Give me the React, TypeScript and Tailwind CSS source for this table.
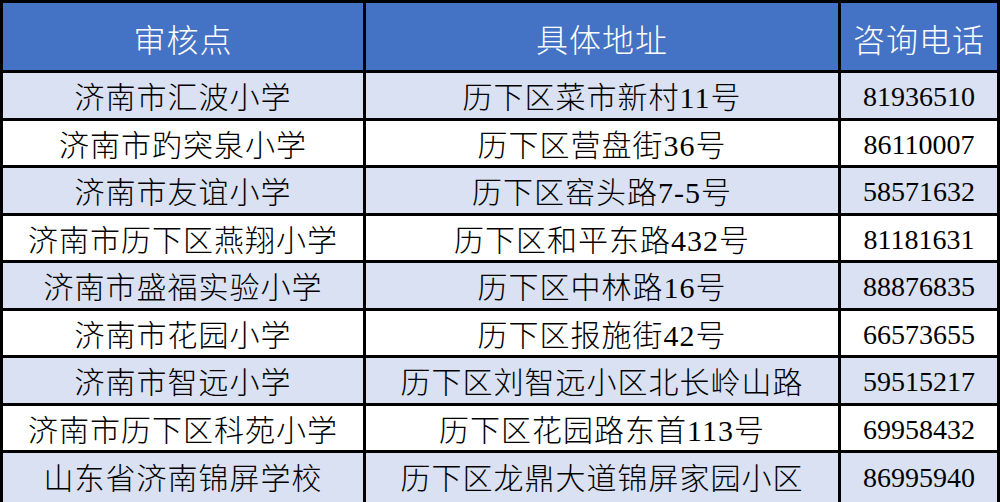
const rows = [
  ['济南市汇波小学', '历下区菜市新村11号', '81936510'],
  ['济南市趵突泉小学', '历下区营盘街36号', '86110007'],
  ['济南市友谊小学', '历下区窑头路7-5号', '58571632'],
  ['济南市历下区燕翔小学', '历下区和平东路432号', '81181631'],
  ['济南市盛福实验小学', '历下区中林路16号', '88876835'],
  ['济南市花园小学', '历下区报施街42号', '66573655'],
  ['济南市智远小学', '历下区刘智远小区北长岭山路', '59515217'],
  ['济南市历下区科苑小学', '历下区花园路东首113号', '69958432'],
  ['山东省济南锦屏学校', '历下区龙鼎大道锦屏家园小区', '86995940'],
];

const cjk = "font-['Liberation_Serif','Noto_Sans_CJK_SC',serif]";

export default function App() {
  return (
    <div className="w-[1000px] h-[502px] overflow-hidden bg-white">
      <div
        className={`grid grid-cols-[360px_472px_156px] grid-rows-[67px_repeat(8,44.5px)_60px] gap-[3px] bg-black pt-[3px] px-[3px] text-black ${cjk}`}
      >
        {['审核点', '具体地址', '咨询电话'].map((h) => (
          <div
            key={h}
            className="bg-[#4472c4] text-white text-[32px] font-light tracking-[1px] leading-none flex items-center justify-center pt-[8px]"
          >
            {h}
          </div>
        ))}
        {rows.map((r, i) => {
          const bg = i % 2 === 0 ? 'bg-[#d9e1f2]' : 'bg-white';
          const lastPad = i === rows.length - 1 ? 'pb-[14px]' : '';
          return [
            <div
              key={i + 'a'}
              className={`${bg} ${lastPad} text-[30px] font-light tracking-[1px] leading-none flex items-center justify-center pt-[6px]`}
            >
              {r[0]}
            </div>,
            <div
              key={i + 'b'}
              className={`${bg} ${lastPad} text-[30px] font-light tracking-[1px] leading-none flex items-center justify-center pt-[6px]`}
            >
              {r[1]}
            </div>,
            <div
              key={i + 'c'}
              className={`${bg} ${lastPad} text-[28px] leading-none flex items-center justify-center pt-[4px]`}
            >
              {r[2]}
            </div>,
          ];
        })}
      </div>
    </div>
  );
}
